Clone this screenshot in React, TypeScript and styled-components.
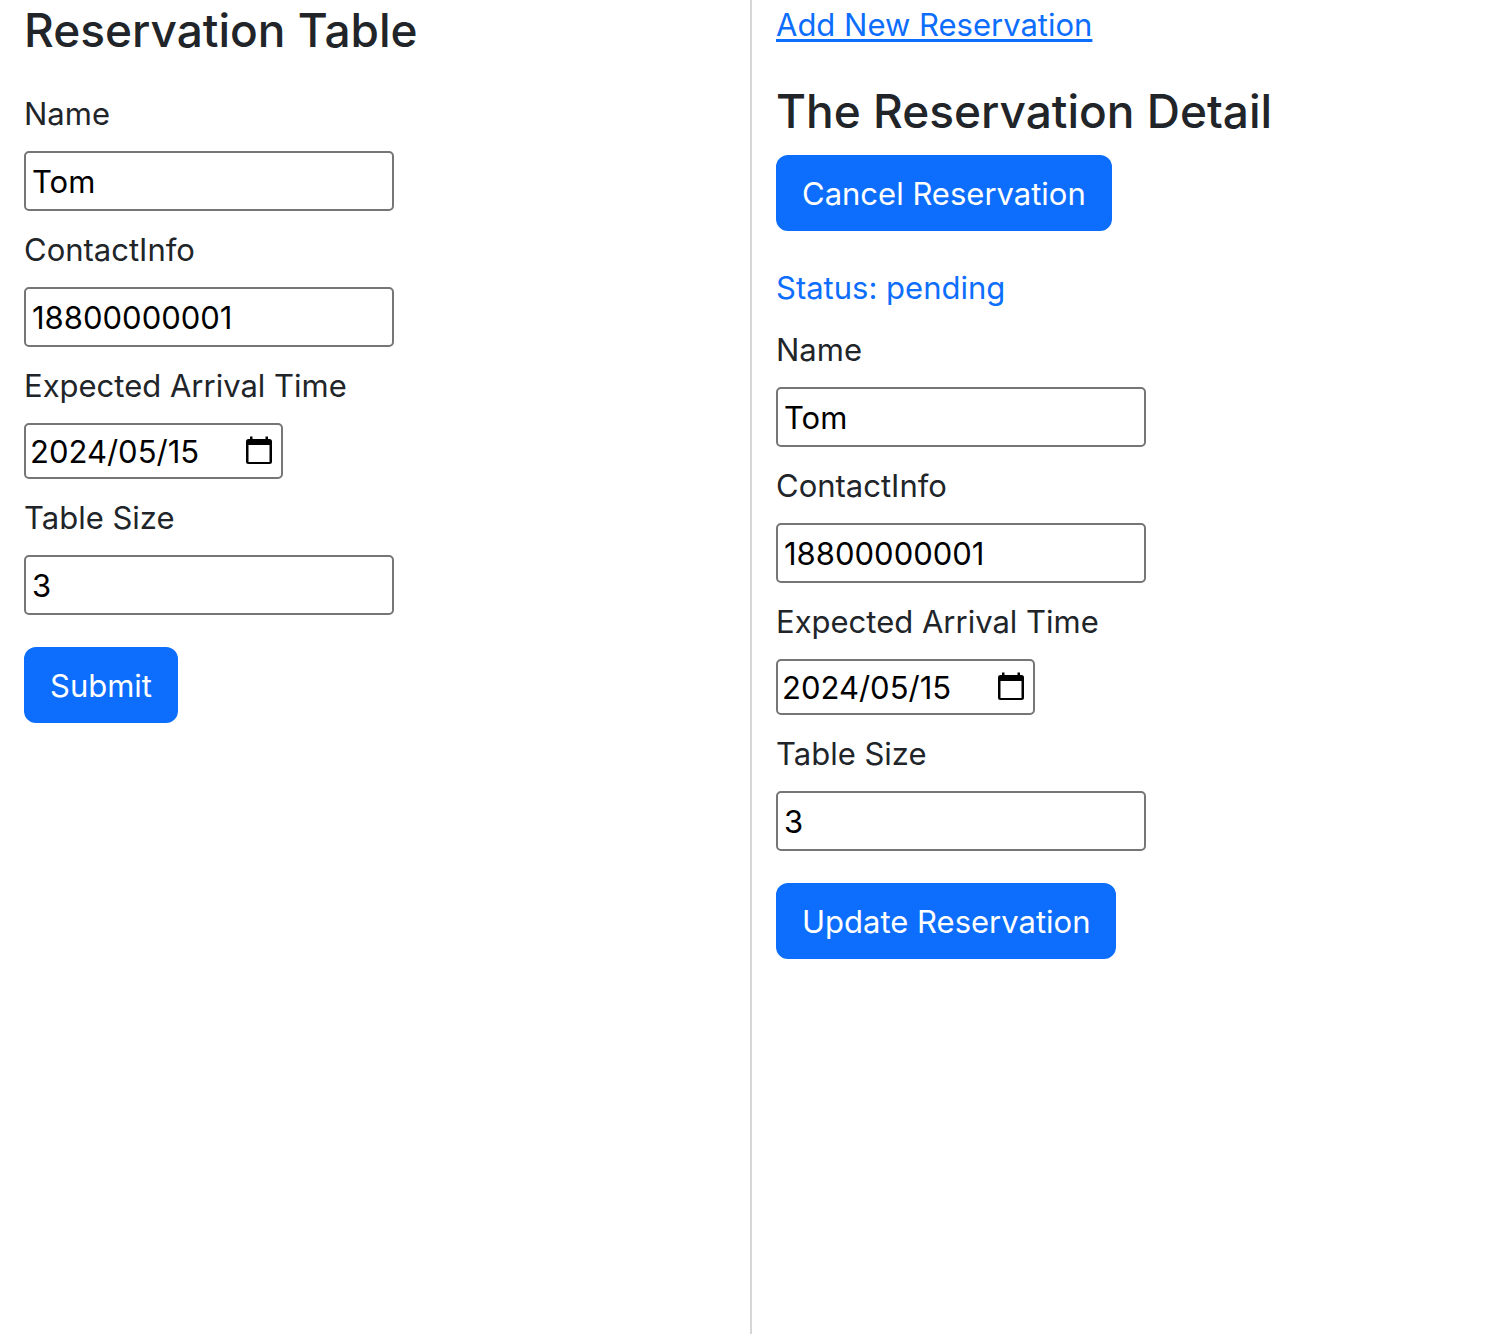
import React, { useId, useState } from "react";
import styled, { createGlobalStyle } from "styled-components";

const GlobalStyle = createGlobalStyle`
  *, *::before, *::after { box-sizing: border-box; }
  body {
    margin: 0;
    background: #fff;
    color: #212529;
    font-family: Inter, "Liberation Sans", sans-serif;
    font-size: 31px;
    line-height: 48px;
  }
`;

const Page = styled.div`
  display: grid;
  grid-template-columns: 1fr 2px 1fr;
  min-height: 100vh;
`;

const Divider = styled.div`
  background: #d6d6d6;
`;

const Panel = styled.section`
  display: flex;
  flex-direction: column;
  align-items: flex-start;
  padding: 0 24px;
`;

const Title = styled.h3`
  margin: 0;
  font-size: 46px;
  font-weight: 500;
  line-height: 60px;
`;

const NewLink = styled.a`
  margin-bottom: 31px;
  line-height: 50px;
  color: #0d6efd;
  text-decoration: underline;
  text-decoration-thickness: 3px;
  text-underline-offset: 3px;
`;

const Button = styled.button`
  height: 76px;
  padding: 2px 24px 0;
  border: 2px solid #0d6efd;
  border-radius: 12px;
  background: #0d6efd;
  color: #fff;
  font: inherit;
  cursor: pointer;
`;

const Status = styled.p`
  margin: 33px 0 0;
  color: #0d6efd;
`;

const DetailHeader = styled.header`
  display: flex;
  flex-direction: column;
  align-items: flex-start;
  gap: 14px;
`;

const Form = styled.form<{ $top: number }>`
  display: flex;
  flex-direction: column;
  align-items: flex-start;
  gap: 32px;
  margin-top: ${(p) => p.$top}px;
`;

const Fields = styled.div`
  display: flex;
  flex-direction: column;
  gap: 15px;
`;

const Field = styled.div`
  display: flex;
  flex-direction: column;
  align-items: flex-start;
  gap: 13px;
`;

const TextInput = styled.input`
  width: 370px;
  height: 60px;
  padding: 2px 6px;
  border: 2px solid #767676;
  border-radius: 5px;
  background: #fff;
  color: #000;
  font: inherit;
`;

const DateBox = styled.div`
  display: flex;
  align-items: center;
  justify-content: space-between;
  width: 259px;
  height: 56px;
  padding: 0 8px 0 4px;
  border: 2px solid #767676;
  border-radius: 5px;
`;

const DateInput = styled.input`
  width: 190px;
  padding: 2px 0 0;
  border: 0;
  background: transparent;
  color: #000;
  font: inherit;
`;

const PickerButton = styled.button`
  display: flex;
  padding: 0;
  border: 0;
  background: transparent;
  color: #000;
  cursor: pointer;
`;

function CalendarIcon() {
  return (
    <svg width="28" height="30" viewBox="0 0 28 30" aria-hidden="true">
      <path
        fill="currentColor"
        fillRule="evenodd"
        d="M5 .5h2.500V3h13V.5H23V3h1.500a2.500 2.500 0 0 1 2.500 2.500v20a2.500 2.500 0 0 1-2.500 2.500h-21A2.500 2.500 0 0 1 1 25.500v-20A2.500 2.500 0 0 1 3.500 3H5zM3.500 9v17h21V9z"
      />
    </svg>
  );
}

function TextField({ label, initial }: { label: string; initial: string }) {
  const id = useId();
  const [value, setValue] = useState(initial);
  return (
    <Field>
      <label htmlFor={id}>{label}</label>
      <TextInput id={id} value={value} onChange={(e) => setValue(e.target.value)} />
    </Field>
  );
}

function DateField({ label, initial }: { label: string; initial: string }) {
  const id = useId();
  const [value, setValue] = useState(initial);
  return (
    <Field>
      <label htmlFor={id}>{label}</label>
      <DateBox>
        <DateInput id={id} value={value} onChange={(e) => setValue(e.target.value)} />
        <PickerButton type="button" aria-label="Show date picker">
          <CalendarIcon />
        </PickerButton>
      </DateBox>
    </Field>
  );
}

function ReservationForm({ action, top }: { action: string; top: number }) {
  return (
    <Form $top={top} onSubmit={(e) => e.preventDefault()}>
      <Fields>
        <TextField label="Name" initial="Tom" />
        <TextField label="ContactInfo" initial="18800000001" />
        <DateField label="Expected Arrival Time" initial="2024/05/15" />
        <TextField label="Table Size" initial="3" />
      </Fields>
      <Button type="submit">{action}</Button>
    </Form>
  );
}

export default function App() {
  return (
    <>
      <GlobalStyle />
      <Page>
        <Panel>
          <Title>Reservation Table</Title>
          <ReservationForm action="Submit" top={30} />
        </Panel>
        <Divider />
        <Panel>
          <NewLink href="#new">Add New Reservation</NewLink>
          <DetailHeader>
            <Title>The Reservation Detail</Title>
            <Button type="button">Cancel Reservation</Button>
          </DetailHeader>
          <Status>Status: pending</Status>
          <ReservationForm action="Update Reservation" top={14} />
        </Panel>
      </Page>
    </>
  );
}
